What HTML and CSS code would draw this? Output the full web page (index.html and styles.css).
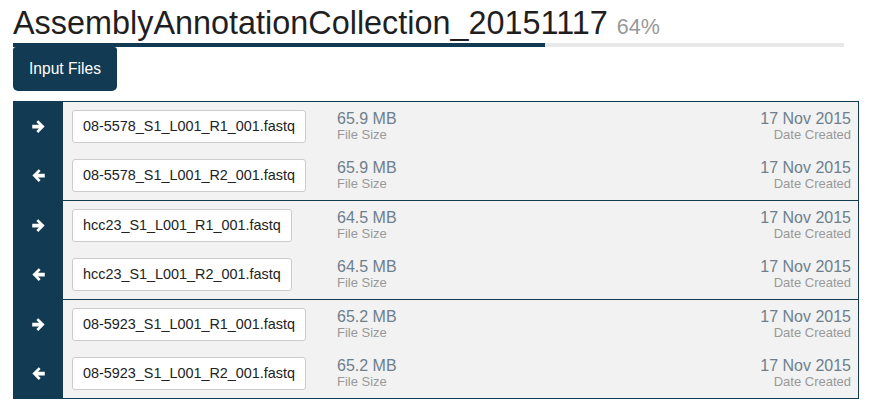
FILE: index.html
```html
<!DOCTYPE html>
<html>
<head>
<meta charset="utf-8">
<link rel="stylesheet" href="styles.css">
</head>
<body>
<div class="page">
  <h1 class="title">AssemblyAnnotationCollection_20151117 <span class="pct">64%</span></h1>
  <div class="progress"><div class="progress-fill" style="width:64%"></div></div>
  <button class="tab">Input Files</button>
  <div class="files">
    <div class="group">
      <div class="row">
        <div class="dir"><svg viewBox="0 0 12 12" class="arrow"><path d="M1 4.5h5.4L4.3 2.4 5.8 0.9 10.9 6l-5.1 5.1-1.5-1.5 2.1-2.1H1z" fill="#fff"/></svg></div>
        <div class="name"><span class="box">08-5578_S1_L001_R1_001.fastq</span></div>
        <div class="size"><div class="val">65.9 MB</div><div class="lbl">File Size</div></div>
        <div class="date"><div class="val">17 Nov 2015</div><div class="lbl">Date Created</div></div>
      </div>
      <div class="row">
        <div class="dir"><svg viewBox="0 0 12 12" class="arrow"><path d="M11 4.5H5.6l2.1-2.1L6.2 0.9 1.1 6l5.1 5.1 1.5-1.5-2.1-2.1H11z" fill="#fff"/></svg></div>
        <div class="name"><span class="box">08-5578_S1_L001_R2_001.fastq</span></div>
        <div class="size"><div class="val">65.9 MB</div><div class="lbl">File Size</div></div>
        <div class="date"><div class="val">17 Nov 2015</div><div class="lbl">Date Created</div></div>
      </div>
    </div>
    <div class="group">
      <div class="row">
        <div class="dir"><svg viewBox="0 0 12 12" class="arrow"><path d="M1 4.5h5.4L4.3 2.4 5.8 0.9 10.9 6l-5.1 5.1-1.5-1.5 2.1-2.1H1z" fill="#fff"/></svg></div>
        <div class="name"><span class="box">hcc23_S1_L001_R1_001.fastq</span></div>
        <div class="size"><div class="val">64.5 MB</div><div class="lbl">File Size</div></div>
        <div class="date"><div class="val">17 Nov 2015</div><div class="lbl">Date Created</div></div>
      </div>
      <div class="row">
        <div class="dir"><svg viewBox="0 0 12 12" class="arrow"><path d="M11 4.5H5.6l2.1-2.1L6.2 0.9 1.1 6l5.1 5.1 1.5-1.5-2.1-2.1H11z" fill="#fff"/></svg></div>
        <div class="name"><span class="box">hcc23_S1_L001_R2_001.fastq</span></div>
        <div class="size"><div class="val">64.5 MB</div><div class="lbl">File Size</div></div>
        <div class="date"><div class="val">17 Nov 2015</div><div class="lbl">Date Created</div></div>
      </div>
    </div>
    <div class="group">
      <div class="row">
        <div class="dir"><svg viewBox="0 0 12 12" class="arrow"><path d="M1 4.5h5.4L4.3 2.4 5.8 0.9 10.9 6l-5.1 5.1-1.5-1.5 2.1-2.1H1z" fill="#fff"/></svg></div>
        <div class="name"><span class="box">08-5923_S1_L001_R1_001.fastq</span></div>
        <div class="size"><div class="val">65.2 MB</div><div class="lbl">File Size</div></div>
        <div class="date"><div class="val">17 Nov 2015</div><div class="lbl">Date Created</div></div>
      </div>
      <div class="row">
        <div class="dir"><svg viewBox="0 0 12 12" class="arrow"><path d="M11 4.5H5.6l2.1-2.1L6.2 0.9 1.1 6l5.1 5.1 1.5-1.5-2.1-2.1H11z" fill="#fff"/></svg></div>
        <div class="name"><span class="box">08-5923_S1_L001_R2_001.fastq</span></div>
        <div class="size"><div class="val">65.2 MB</div><div class="lbl">File Size</div></div>
        <div class="date"><div class="val">17 Nov 2015</div><div class="lbl">Date Created</div></div>
      </div>
    </div>
  </div>
</div>
</body>
</html>
```

FILE: styles.css
```css
* { box-sizing: border-box; }
body {
  margin: 0;
  background: #fff;
  font-family: "Liberation Sans", Arial, sans-serif;
  color: #222;
}
.page {
  padding: 7px 27px 0 13px;
}
.title {
  margin: 0;
  font-size: 32.4px;
  font-weight: normal;
  line-height: 32px;
  height: 32px;
  color: #1f1f1f;
  white-space: nowrap;
}
.pct {
  font-size: 21.5px;
  line-height: 1;
  color: #999;
}
.progress {
  height: 4px;
  background: #e8e8e8;
  margin-top: 4px;
  width: 831px;
}
.progress-fill {
  height: 100%;
  background: #133a53;
}
.tab {
  display: block;
  margin: 0;
  border: none;
  background: #133a53;
  color: #fff;
  font-family: "Liberation Sans", Arial, sans-serif;
  font-size: 15.6px;
  height: 44px;
  width: 104px;
  padding: 0;
  border-radius: 3px 3px 5px 5px;
}
.files {
  margin-top: 10px;
  width: 846px;
  border: 1px solid #133a53;
  border-left: none;
  background: #f2f2f2;
}
.group + .group {
  border-top: 1px solid #133a53;
}
.row {
  display: grid;
  grid-template-columns: 50px 274px 1fr auto;
  height: 49px;
  align-items: center;
}
.dir {
  background: #133a53;
  height: 100%;
  display: flex;
  align-items: center;
  justify-content: center;
}
.arrow {
  width: 15px;
  height: 15px;
}
.name {
  padding-left: 9px;
}
.box {
  display: inline-block;
  background: #fff;
  border: 1px solid #ccc;
  border-radius: 3px;
  height: 33px;
  line-height: 31px;
  padding: 0 10px;
  font-size: 14.4px;
  color: #222;
  white-space: nowrap;
}
.size, .date {
  margin-top: -2px;
}
.val {
  font-size: 16px;
  color: #6e7f8c;
  line-height: 17px;
}
.lbl {
  font-size: 13px;
  color: #999;
  line-height: 15px;
}
.date {
  text-align: right;
  padding-right: 7px;
}
```
